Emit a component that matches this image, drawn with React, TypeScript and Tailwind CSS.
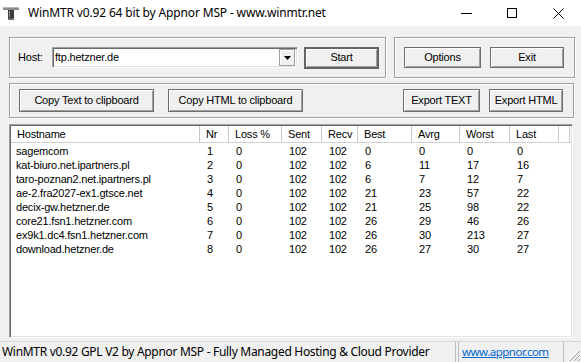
import React from 'react';

const COLUMNS = [
  { label: 'Hostname', w: 'w-[189px]' },
  { label: 'Nr', w: 'w-[29px]' },
  { label: 'Loss %', w: 'w-[53px]' },
  { label: 'Sent', w: 'w-[40px]' },
  { label: 'Recv', w: 'w-[36px]' },
  { label: 'Best', w: 'w-[54px]' },
  { label: 'Avrg', w: 'w-[48px]' },
  { label: 'Worst', w: 'w-[50px]' },
  { label: 'Last', w: 'w-[49px]' },
];

const HOPS = [
  ['sagemcom', '1', '0', '102', '102', '0', '0', '0', '0'],
  ['kat-biuro.net.ipartners.pl', '2', '0', '102', '102', '6', '11', '17', '16'],
  ['taro-poznan2.net.ipartners.pl', '3', '0', '102', '102', '6', '7', '12', '7'],
  ['ae-2.fra2027-ex1.gtsce.net', '4', '0', '102', '102', '21', '23', '57', '22'],
  ['decix-gw.hetzner.de', '5', '0', '102', '102', '21', '25', '98', '22'],
  ['core21.fsn1.hetzner.com', '6', '0', '102', '102', '26', '29', '46', '26'],
  ['ex9k1.dc4.fsn1.hetzner.com', '7', '0', '102', '102', '26', '30', '213', '27'],
  ['download.hetzner.de', '8', '0', '102', '102', '26', '27', '30', '27'],
];

const dlg = "font-['Liberation_Sans',Arial,sans-serif] text-[11px] tracking-[-0.2px] text-black";
const ui = "font-['Noto_Sans','Open_Sans',sans-serif] text-[12px] text-black";

// raised classic button
const Btn: React.FC<{ w: string; h: string; def?: boolean; children: React.ReactNode }> = ({ w, h, def, children }) => (
  <div
    className={`${w} ${h} ${dlg} flex items-center justify-center bg-[#f0f0f0] ${
      def
        ? 'border-2 border-[#646464] shadow-[inset_1px_1px_0_#fff,inset_-1px_-1px_0_#a0a0a0]'
        : 'border border-[#6e6e6e] shadow-[inset_1px_1px_0_#fff,inset_-1px_-1px_0_#a0a0a0]'
    }`}
  >
    {children}
  </div>
);

const Group: React.FC<{ className: string; children: React.ReactNode }> = ({ className, children }) => (
  <div className={`border border-[#a0a0a0] shadow-[inset_1px_1px_0_#fff,1px_1px_0_#fff] flex items-center ${className}`}>
    {children}
  </div>
);

const App: React.FC = () => {
  return (
    <div className="w-[581px] h-[362px] bg-[#f0f0f0] flex flex-col overflow-hidden">
      {/* Title bar */}
      <div className="h-[26px] bg-white flex items-center shrink-0">
        <svg width="18" height="16" viewBox="0 0 18 16" className="ml-[3px] mr-[7px]">
          <rect x="0" y="2" width="16" height="3" fill="#8a8a8a" />
          <rect x="0" y="2" width="16" height="1" fill="#b8b8b8" />
          <rect x="5" y="5" width="6" height="8" fill="#3c3c3c" />
          <rect x="6" y="6" width="1" height="6" fill="#9a9a9a" />
          <rect x="5" y="13" width="6" height="2" fill="#6a6a6a" />
        </svg>
        <span className={`${ui} tracking-[-0.15px]`}>WinMTR v0.92 64 bit by Appnor MSP - www.winmtr.net</span>
        <div className="ml-auto flex items-center h-full">
          <div className="w-[46px] h-full flex items-center justify-center">
            <div className="w-[11px] h-px bg-black" />
          </div>
          <div className="w-[46px] h-full flex items-center justify-center">
            <div className="w-[10px] h-[10px] border border-black" />
          </div>
          <div className="w-[46px] h-full flex items-center justify-center">
            <svg width="11" height="11" viewBox="0 0 11 11">
              <path d="M0.5 0.5 L10.5 10.5 M10.5 0.5 L0.5 10.5" stroke="#000" strokeWidth="1" />
            </svg>
          </div>
        </div>
      </div>

      {/* Host / buttons row */}
      <div className="mt-[11px] ml-[9px] flex gap-[8px] h-[41px] shrink-0">
        <Group className="w-[377px] pl-[8px]">
          <span className={`${dlg} w-[34px]`}>Host:</span>
          <div className="w-[246px] h-[21px] bg-white border border-t-[#a0a0a0] border-l-[#a0a0a0] border-r-white border-b-white shadow-[inset_1px_1px_0_#696969,inset_-1px_-1px_0_#e3e3e3] flex items-center">
            <span className={`${dlg} ml-[2px] flex-1`}>ftp.hetzner.de</span>
            <div className="w-[16px] h-[17px] mr-[2px] bg-[#f0f0f0] border border-[#a0a0a0] shadow-[inset_1px_1px_0_#fff] flex items-center justify-center">
              <svg width="7" height="4" viewBox="0 0 7 4">
                <path d="M0 0 H7 L3.5 4 Z" fill="#000" />
              </svg>
            </div>
          </div>
          <div className="ml-[6px]">
            <Btn w="w-[75px]" h="h-[22px]" def>
              Start
            </Btn>
          </div>
        </Group>
        <Group className="w-[181px] pl-[9px] gap-[9px]">
          <Btn w="w-[77px]" h="h-[21px]">
            Options
          </Btn>
          <Btn w="w-[74px]" h="h-[21px]">
            Exit
          </Btn>
        </Group>
      </div>

      {/* Export row */}
      <div className="mt-[5px] ml-[9px] h-[35px] shrink-0">
        <Group className="w-[565px] h-full pl-[9px]">
          <Btn w="w-[135px]" h="h-[23px]">
            Copy Text to clipboard
          </Btn>
          <div className="ml-[14px]">
            <Btn w="w-[135px]" h="h-[23px]">
              Copy HTML to clipboard
            </Btn>
          </div>
          <div className="ml-[100px] flex gap-[9px]">
            <Btn w="w-[77px]" h="h-[23px]">
              Export TEXT
            </Btn>
            <Btn w="w-[74px]" h="h-[23px]">
              Export HTML
            </Btn>
          </div>
        </Group>
      </div>

      {/* Trace list */}
      <div className="mt-[6px] ml-[9px] w-[564px] h-[214px] shrink-0 bg-white border border-t-[#a0a0a0] border-l-[#a0a0a0] border-r-white border-b-white shadow-[inset_1px_1px_0_#696969,inset_-1px_-1px_0_#e3e3e3] pl-[1px] pt-[1px]">
        <div className="flex h-[17px] border-b border-[#d0d0d0]">
          {COLUMNS.map((c) => (
            <div key={c.label} className={`${c.w} ${dlg} pl-[6px] border-r border-[#c8c8c8] flex items-center`}>
              {c.label}
            </div>
          ))}
          <div className="w-[11px] border-r border-[#c8c8c8]" />
        </div>
        <div className="pt-[1px]">
          {HOPS.map((row) => (
            <div key={row[0]} className="flex h-[14px] items-center">
              {row.map((cell, i) => (
                <div key={i} className={`${COLUMNS[i].w} ${dlg} ${i === 0 ? 'pl-[5px]' : 'pl-[7px]'} whitespace-nowrap`}>
                  {cell}
                </div>
              ))}
            </div>
          ))}
        </div>
      </div>

      {/* Status bar */}
      <div className="mt-[3px] h-[21px] flex border-t border-[#d7d7d7] shrink-0">
        <div className={`${ui} tracking-[-0.3px] w-[456px] pl-[2px] border-r border-[#bcbcbc] flex items-center`}>
          WinMTR v0.92 GPL V2 by Appnor MSP - Fully Managed Hosting &amp; Cloud Provider
        </div>
        <div className="ml-[2px] w-[106px] border-l border-r border-[#bcbcbc] flex items-center pl-[3px]">
          <span className="font-['Noto_Sans','Open_Sans',sans-serif] text-[11.5px] text-[#0066cc] underline tracking-[-0.5px]">
            www.appnor.com
          </span>
        </div>
        <div className="flex-1 flex items-end justify-end">
          <svg width="14" height="14" viewBox="0 0 14 14">
            <path d="M13 3 L3 13 M13 7 L7 13 M13 11 L11 13" stroke="#a0a0a0" strokeWidth="1" />
          </svg>
        </div>
      </div>
    </div>
  );
};

export default App;
